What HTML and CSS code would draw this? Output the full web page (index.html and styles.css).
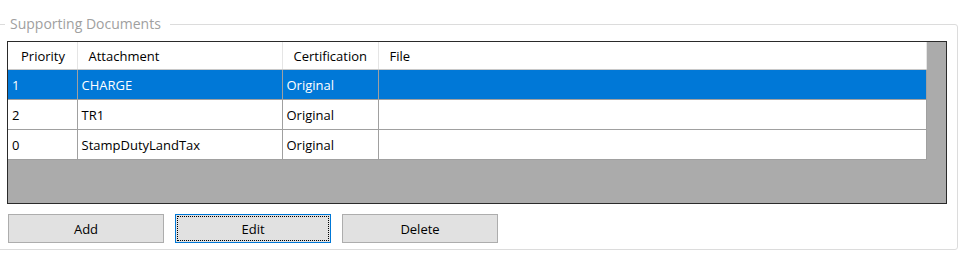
FILE: index.html
```html
<!DOCTYPE html>
<html lang="en">
<head>
  <meta charset="UTF-8">
  <title>Supporting Documents</title>
  <link rel="stylesheet" href="styles.css">
</head>
<body>
  <fieldset class="group">
    <legend>Supporting Documents</legend>

    <div class="grid">
      <table class="docs">
        <colgroup>
          <col class="col-priority">
          <col class="col-attachment">
          <col class="col-cert">
          <col class="col-file">
        </colgroup>
        <thead>
          <tr>
            <th>Priority</th>
            <th>Attachment</th>
            <th>Certification</th>
            <th>File</th>
          </tr>
        </thead>
        <tbody>
          <tr class="selected">
            <td>1</td>
            <td>CHARGE</td>
            <td>Original</td>
            <td></td>
          </tr>
          <tr>
            <td>2</td>
            <td>TR1</td>
            <td>Original</td>
            <td></td>
          </tr>
          <tr>
            <td>0</td>
            <td>StampDutyLandTax</td>
            <td>Original</td>
            <td></td>
          </tr>
        </tbody>
      </table>
    </div>

    <div class="buttons">
      <button>Add</button>
      <button class="focused">Edit</button>
      <button>Delete</button>
    </div>
  </fieldset>
</body>
</html>
```

FILE: styles.css
```css
body {
  margin: 0;
  background: #fff;
  font-family: "Open Sans", "Noto Sans", sans-serif;
  font-size: 13px;
  color: #000;
}
.group {
  margin: 16px 5px 0 -4px;
  padding: 9px 10px 6px 10px;
  border: 1px solid #dcdcdc;
  border-radius: 3px;
  min-width: 0;
}
.group legend {
  margin-left: -2px;
  padding: 0 9px 0 5px;
  line-height: 16px;
  font-size: 14px;
  color: #a0a0a0;
}
.grid {
  height: 161px;
  border: 1px solid #2a2a2a;
  background: #ababab;
}
.docs {
  width: 918px;
  border-collapse: collapse;
  table-layout: fixed;
  background: #fff;
}
.col-priority { width: 69px; }
.col-attachment { width: 205px; }
.col-cert { width: 96px; }
.col-file { width: 548px; }
.docs th {
  height: 27px;
  padding: 0 0 0 11px;
  text-align: left;
  font-weight: normal;
  border-right: 1px solid #e5e5e5;
  border-bottom: 1px solid #c8c8c8;
}
.docs th:first-child {
  padding-left: 13px;
}
.docs td {
  height: 29px;
  padding: 0 0 0 4px;
  border-right: 1px solid #a0a0a0;
  border-bottom: 1px solid #a0a0a0;
}
.docs th, .docs td {
  white-space: nowrap;
  overflow: hidden;
}
.docs tr.selected td {
  background: #0078d7;
  color: #fff;
}
.buttons {
  display: flex;
  gap: 11px;
  margin-top: 10px;
  padding-left: 1px;
}
.buttons button {
  width: 156px;
  height: 29px;
  padding: 0;
  background: #e1e1e1;
  border: 1px solid #adadad;
  font-family: inherit;
  font-size: 13px;
  color: #000;
}
.buttons button.focused {
  border-color: #0078d7;
  outline: 1px dotted #000;
  outline-offset: -3px;
}
```
